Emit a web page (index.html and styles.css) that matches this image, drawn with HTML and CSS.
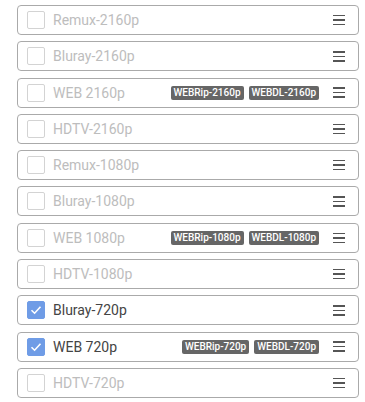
FILE: index.html
```html
<!DOCTYPE html>
<html>
<head>
    <title>Qualities</title>
    <link rel="stylesheet" href="styles.css">
</head>
<body>
    <div class="qualities">
        <div class="quality">
            <span class="check"></span>
            <span class="name">Remux-2160p</span>
            <span class="handle"><i></i><i></i><i></i></span>
        </div>
        <div class="quality">
            <span class="check"></span>
            <span class="name">Bluray-2160p</span>
            <span class="handle"><i></i><i></i><i></i></span>
        </div>
        <div class="quality">
            <span class="check"></span>
            <span class="name">WEB 2160p</span>
            <span class="tags"><span class="tag">WEBRip-2160p</span><span class="tag">WEBDL-2160p</span></span>
            <span class="handle"><i></i><i></i><i></i></span>
        </div>
        <div class="quality">
            <span class="check"></span>
            <span class="name">HDTV-2160p</span>
            <span class="handle"><i></i><i></i><i></i></span>
        </div>
        <div class="quality">
            <span class="check"></span>
            <span class="name">Remux-1080p</span>
            <span class="handle"><i></i><i></i><i></i></span>
        </div>
        <div class="quality">
            <span class="check"></span>
            <span class="name">Bluray-1080p</span>
            <span class="handle"><i></i><i></i><i></i></span>
        </div>
        <div class="quality">
            <span class="check"></span>
            <span class="name">WEB 1080p</span>
            <span class="tags"><span class="tag">WEBRip-1080p</span><span class="tag">WEBDL-1080p</span></span>
            <span class="handle"><i></i><i></i><i></i></span>
        </div>
        <div class="quality">
            <span class="check"></span>
            <span class="name">HDTV-1080p</span>
            <span class="handle"><i></i><i></i><i></i></span>
        </div>
        <div class="quality checked">
            <span class="check"><svg width="12" height="10" viewBox="0 0 12 10"><path d="M1.5 5.2 L4.6 8.2 L10.5 1.8" fill="none" stroke="#fff" stroke-width="1.6"/></svg></span>
            <span class="name">Bluray-720p</span>
            <span class="handle"><i></i><i></i><i></i></span>
        </div>
        <div class="quality checked">
            <span class="check"><svg width="12" height="10" viewBox="0 0 12 10"><path d="M1.5 5.2 L4.6 8.2 L10.5 1.8" fill="none" stroke="#fff" stroke-width="1.6"/></svg></span>
            <span class="name">WEB 720p</span>
            <span class="tags"><span class="tag">WEBRip-720p</span><span class="tag">WEBDL-720p</span></span>
            <span class="handle"><i></i><i></i><i></i></span>
        </div>
        <div class="quality">
            <span class="check"></span>
            <span class="name">HDTV-720p</span>
            <span class="handle"><i></i><i></i><i></i></span>
        </div>
    </div>
</body>
</html>
```
FILE: styles.css
```css
* {
    margin: 0;
    padding: 0;
    box-sizing: border-box;
}
body {
    background-color: #fff;
    font-family: Roboto, "Liberation Sans", sans-serif;
}
.qualities {
    display: flex;
    flex-direction: column;
    gap: 6.3px;
    margin: 5px 6px 0 17px;
}
.quality {
    display: flex;
    align-items: center;
    height: 30px;
    padding: 0 13px 0 9px;
    border: 1px solid #aaa;
    border-radius: 4px;
}
.check {
    display: flex;
    align-items: center;
    justify-content: center;
    width: 18px;
    height: 18px;
    border: 1px solid #d3d3d3;
    border-radius: 2px;
    margin-right: 8px;
}
.name {
    font-size: 14px;
    color: #bdbdbd;
}
.checked .check {
    background-color: #6f9ce6;
    border-color: #6f9ce6;
}
.checked .name {
    color: #444;
}
.tags {
    display: flex;
    gap: 5px;
    margin-left: auto;
    margin-right: 14px;
}
.tag {
    background-color: #666;
    color: #fff;
    font-size: 10px;
    font-weight: 500;
    line-height: 14px;
    padding: 0 3px;
    border-radius: 2px;
}
.handle {
    display: flex;
    flex-direction: column;
    gap: 3px;
    width: 12px;
    margin-left: auto;
}
.tags + .handle {
    margin-left: 0;
}
.handle i {
    display: block;
    height: 1.5px;
    background-color: #555;
}
```
